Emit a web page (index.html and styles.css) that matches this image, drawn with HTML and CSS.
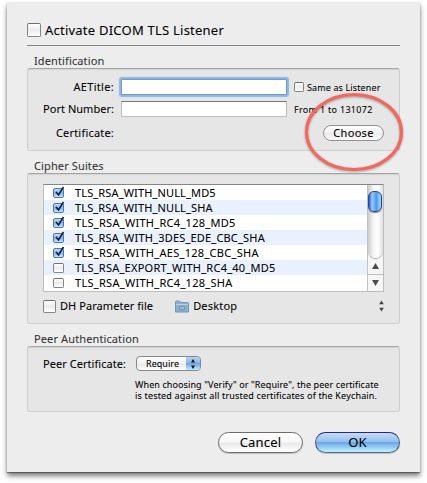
FILE: index.html
```
<!DOCTYPE html>
<html lang="en">
<head>
<meta charset="utf-8">
<title>DICOM TLS Listener</title>
<link rel="stylesheet" href="styles.css">
</head>
<body>
<main class="sheet">
  <label class="activate"><span class="check"></span><span class="title">Activate DICOM TLS Listener</span></label>

  <h2 class="heading">Identification</h2>
  <section class="group identification">
    <div class="field ae">
      <span class="name ls-wide">AETitle:</span>
      <input class="input focused" type="text" aria-label="AETitle">
      <span class="check mini"></span><span class="hint same">Same as Listener</span>
    </div>
    <div class="field port">
      <span class="name">Port Number:</span>
      <input class="input" type="text" aria-label="Port Number">
      <span class="hint range">From 1 to 131072</span>
    </div>
    <div class="field cert">
      <span class="name ls-mid">Certificate:</span>
      <button class="choose">Choose</button>
    </div>
    <svg class="callout" viewBox="0 0 104 84"><ellipse cx="52" cy="42" rx="47.5" ry="37.5"/></svg>
  </section>

  <h2 class="heading suites-heading">Cipher Suites</h2>
  <section class="group suites">
    <div class="table">
      <ul class="rows">
        <li><span class="check small on"><svg viewBox="0 0 12 13"><path d="M3 7l2.5 3L10.5 2"/></svg></span><span class="s1">TLS_RSA_WITH_NULL_MD5</span></li>
        <li><span class="check small on"><svg viewBox="0 0 12 13"><path d="M3 7l2.5 3L10.5 2"/></svg></span><span class="s1">TLS_RSA_WITH_NULL_SHA</span></li>
        <li><span class="check small on"><svg viewBox="0 0 12 13"><path d="M3 7l2.5 3L10.5 2"/></svg></span><span class="s2">TLS_RSA_WITH_RC4_128_MD5</span></li>
        <li><span class="check small on"><svg viewBox="0 0 12 13"><path d="M3 7l2.5 3L10.5 2"/></svg></span><span class="s3">TLS_RSA_WITH_3DES_EDE_CBC_SHA</span></li>
        <li><span class="check small on"><svg viewBox="0 0 12 13"><path d="M3 7l2.5 3L10.5 2"/></svg></span><span class="s2">TLS_RSA_WITH_AES_128_CBC_SHA</span></li>
        <li><span class="check small"></span><span class="s4">TLS_RSA_EXPORT_WITH_RC4_40_MD5</span></li>
        <li><span class="check small"></span><span class="s2">TLS_RSA_WITH_RC4_128_SHA</span></li>
      </ul>
      <div class="scrollbar">
        <div class="track"><div class="thumb"></div></div>
        <div class="arrow"><svg viewBox="0 0 7 6"><path d="M3.5 0L7 6H0z"/></svg></div>
        <div class="arrow down"><svg viewBox="0 0 7 6"><path d="M0 0H7L3.5 6z"/></svg></div>
      </div>
    </div>
    <div class="dh">
      <span class="check"></span><span class="dh-name">DH Parameter file</span>
      <svg class="folder" viewBox="0 0 14 13"><path d="M.5 12V2Q.5 1 1.5 1H4.5L6 2.5H12.5Q13.5 2.5 13.5 3.5V12z" fill="#8db1cc" stroke="#6f97b6"/><path d="M1 4.5H13" stroke="#b5d0e3"/><path d="M4.5 9.5v-3h5v3z" fill="#9dbfd7" stroke="#648dac" stroke-width=".8"/></svg>
      <span class="desktop">Desktop</span>
      <svg class="stepper" viewBox="0 0 5 12"><path d="M2.5 .5L4.8 4.2H.2zM.2 7.8H4.8L2.5 11.5z"/></svg>
    </div>
  </section>

  <h2 class="heading peer-heading">Peer Authentication</h2>
  <section class="group peer">
    <div class="peer-row">
      <span class="peer-name">Peer Certificate:</span>
      <div class="popup"><span class="value">Require</span><span class="cap"><svg viewBox="0 0 4 10"><path d="M2 0L4 3.4H0zM0 6.6H4L2 10z"/></svg></span></div>
    </div>
    <p class="note"><span class="n1">When choosing "Verify" or "Require", the peer certificate</span><br><span class="n2">is tested against all trusted certificates of the Keychain.</span></p>
  </section>

  <footer class="buttons">
    <button class="push">Cancel</button>
    <button class="push default">OK</button>
  </footer>
</main>
</body>
</html>
```
FILE: styles.css
```
* { box-sizing: border-box; }
body {
  height: 483px;
  margin: 0;
  padding: 2px 0 0 7px;
  background: #fff;
  color: #000;
  font: 11px/15px "Noto Sans", "Open Sans", sans-serif;
  -webkit-text-stroke: 0.07px currentColor;
}
svg { display: block; }
button { font-family: inherit; color: #000; padding: 0; -webkit-text-stroke: inherit; }

.sheet {
  width: 413px;
  height: 470px;
  padding: 17px 20px 0;
  background: #ededed;
  box-shadow: 0 1px 1px rgba(0,0,0,.35), 0 4px 5px rgba(0,0,0,.5);
}

.activate {
  display: flex;
  align-items: center;
  gap: 4px;
  height: 27px;
  padding-bottom: 4px;
  border-bottom: 1px solid #858585;
  font-size: 13px;
}
.title { letter-spacing: .23px; }
.check {
  flex: none;
  width: 14px;
  height: 14px;
  border: 1px solid #858585;
  border-top-color: #6f6f6f;
  border-radius: 2px;
  background: linear-gradient(#fff, #ebebeb 50%, #fff);
}

.heading {
  height: 15px;
  margin: 7px 0 0;
  padding-left: 7px;
  font-size: 11px;
  font-weight: 400;
  color: #333;
  letter-spacing: .12px;
}
.group {
  position: relative;
  border: 1px solid #cfcfcf;
  border-top: 1px solid #a5a5a5;
  border-radius: 3px;
  background: #e6e6e6;
  box-shadow: inset 0 1px 1px #d2d2d2;
}
.identification { height: 83px; padding-top: 10px; }
.field { display: flex; align-items: center; height: 16px; }
.name {
  width: 86px;
  margin-right: 7px;
  padding-bottom: 1px;
  text-align: right;
  letter-spacing: .03px;
}
.ls-wide { letter-spacing: .3px; }
.ls-mid { letter-spacing: .2px; }
.port { margin-top: 6px; }
.cert { margin-top: 8px; }
.input {
  width: 166px;
  height: 16px;
  padding: 0 2px;
  border: 1px solid #bbb;
  border-top: 1px solid #777;
  background: #fff;
  outline: 0;
}
.focused {
  border-color: #6f9bd2;
  border-radius: 1px;
  box-shadow: 0 0 1px 1.5px #8eb5e3;
}
.mini { width: 10px; height: 10px; margin-left: 7px; }
.hint { font-size: 9px; }
.same { margin-left: 3px; letter-spacing: .12px; }
.range { margin-left: 7px; letter-spacing: .3px; }
.choose {
  width: 61px;
  height: 16px;
  margin-left: 202px;
  border: 1px solid #919191;
  border-radius: 8px;
  background: linear-gradient(#fff, #f1f1f1 50%, #e9e9e9 51%, #fbfbfb);
  font-size: 11px;
  line-height: 12px;
  letter-spacing: .3px;
}
.callout {
  position: absolute;
  left: 274px;
  top: 21px;
  width: 104px;
  height: 84px;
  fill: none;
  stroke: #f8655a;
  stroke-width: 3;
  filter: drop-shadow(0 1px 1px rgba(0,0,0,.35));
  z-index: 1;
}

.suites { height: 151px; padding: 10px 15px 0; }
.table {
  display: flex;
  height: 108px;
  border: 1px solid #bdbdbd;
  border-top-color: #858585;
  background: #fff;
}
.rows { flex: 1; margin: 0; padding: 0; list-style: none; }
.rows li { display: flex; align-items: center; height: 15px; padding-left: 9px; }
.rows li:nth-child(even) { background: #eaf1fe; }
.small { width: 11px; height: 10px; margin-right: 11px; }
.on { border-color: #5475a5; background: linear-gradient(#c4daf5, #80b3ed 50%, #bdeaff); }
.on svg {
  width: 12px;
  height: 13px;
  margin: -4px 0 0 -1px;
  fill: none;
  stroke: #111c34;
  stroke-width: 1.6;
}
.s1 { letter-spacing: .14px; }
.s2 { letter-spacing: .29px; }
.s3 { letter-spacing: .19px; }
.s4 { letter-spacing: .25px; }
.scrollbar {
  display: flex;
  flex-direction: column;
  width: 16px;
  border-left: 1px solid #c4c4c4;
  background: #f6f6f6;
}
.track {
  height: 73px;
  padding: 6px 1px 0 0;
  border-radius: 0 0 8px 8px;
  background: linear-gradient(90deg, #ccc, #f4f4f4 35%, #fff 65%, #dedede);
  box-shadow: 0 1px 1px #aaa;
}
.thumb {
  width: 14px;
  height: 21px;
  border: 1px solid #26458f;
  border-radius: 6px;
  background: linear-gradient(90deg, #1f5dd0, #9ccafa 25%, #74b2f3 45%, #4b95eb 60%, #8fd0fc 90%);
  box-shadow: 0 1px 1px #888;
}
.arrow { display: grid; place-items: center; height: 16px; }
.arrow svg { width: 7px; height: 6px; fill: #4c4c4c; }
.down { height: 17px; border-top: 1px solid #bbb; }

.dh { display: flex; align-items: center; height: 28px; }
.dh .check { width: 13px; height: 13px; }
.dh-name { margin-left: 4px; padding-bottom: 1px; letter-spacing: .06px; }
.folder { width: 14px; height: 13px; margin-left: 22px; }
.desktop { margin-left: 4px; padding-bottom: 1px; letter-spacing: .2px; }
.stepper { width: 5px; height: 12px; margin-left: auto; fill: #444; }

.peer { height: 66px; padding: 9px 15px 0; }
.peer-row { display: flex; align-items: center; height: 15px; }
.peer-name { width: 93px; padding-bottom: 1px; letter-spacing: .05px; }
.popup {
  display: flex;
  width: 65px;
  height: 15px;
  overflow: hidden;
  border: 1px solid #888;
  border-radius: 4px;
  background: linear-gradient(#fff, #f1f1f1 50%, #e7e7e7 51%, #fff);
  font-size: 9px;
  line-height: 13px;
}
.value { flex: 1; padding-left: 9px; letter-spacing: .05px; }
.cap {
  display: grid;
  place-items: center;
  width: 14px;
  background: linear-gradient(#b9d1f0, #8bb5e9 45%, #6ea4e5 50%, #bdebff);
}
.cap svg { width: 4px; height: 10px; fill: #111; }
.note { margin: 8px 0 0 92px; font-size: 9px; line-height: 11px; white-space: nowrap; }
.n1 { letter-spacing: .1px; }
.n2 { letter-spacing: .17px; }

.buttons { display: flex; justify-content: flex-end; gap: 12px; margin-top: 20px; }
.push {
  width: 85px;
  height: 21px;
  border: 1px solid #6d6d6d;
  border-radius: 11px;
  background: linear-gradient(#fff, #f7f7f7 48%, #e9e9e9 52%, #fff);
  box-shadow: 0 1px 1px rgba(0,0,0,.2);
  font-size: 13px;
  line-height: 17px;
  letter-spacing: .2px;
}
.default {
  border-color: #29268a #44568a #52698b;
  background: linear-gradient(#c5dcf5, #97c0ee 45%, #6ba6e7 50%, #c3f2ff);
}
```
